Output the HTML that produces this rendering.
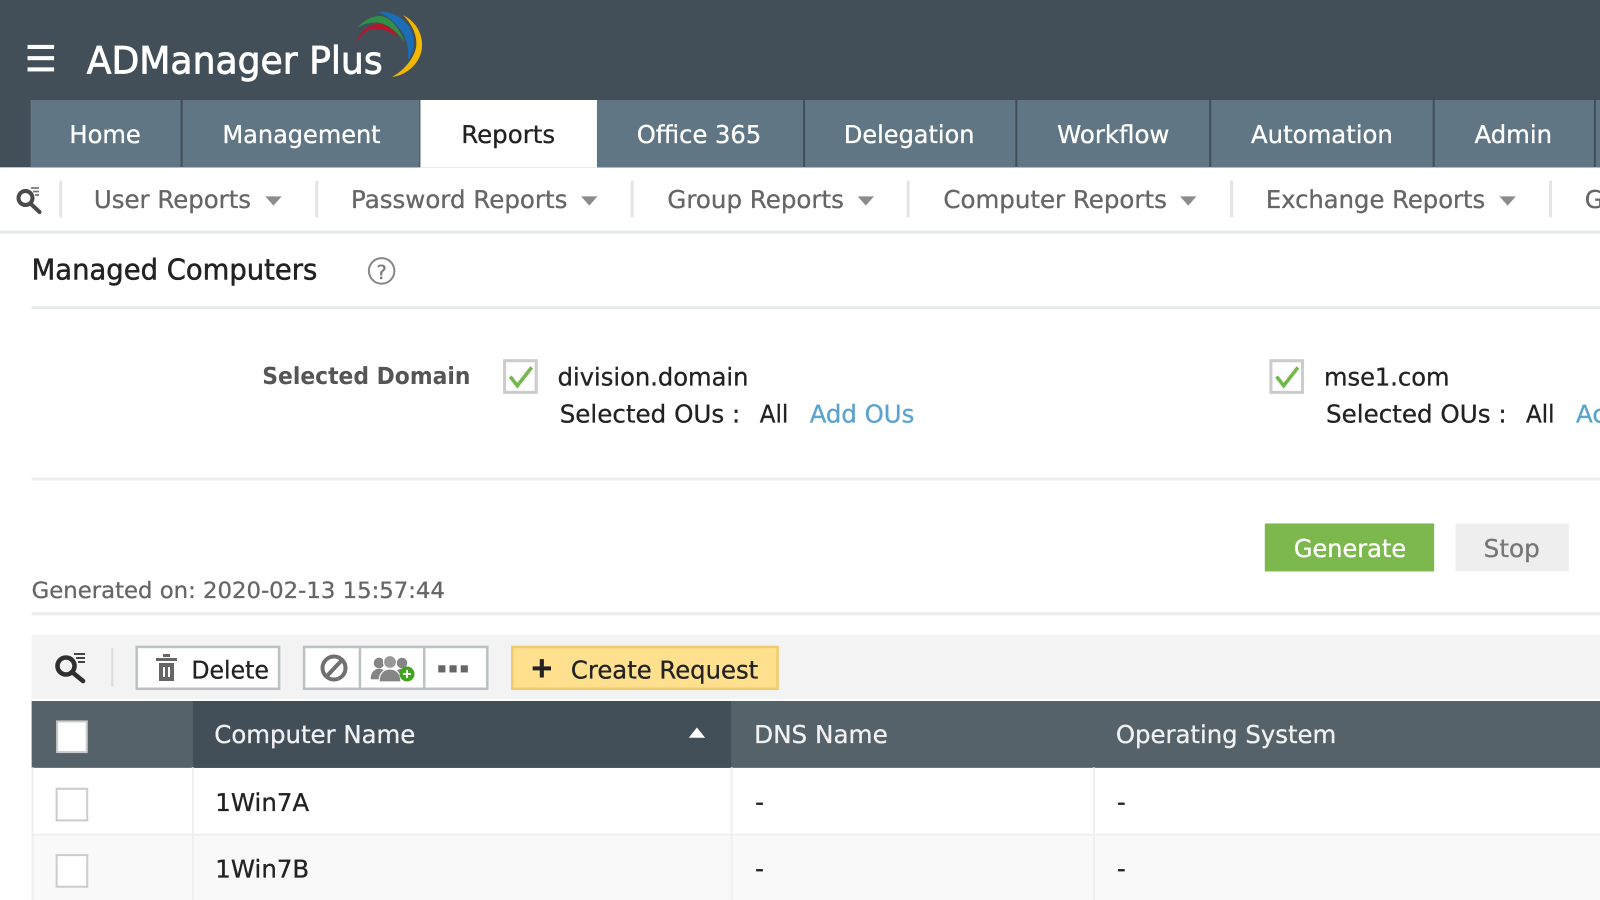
<!DOCTYPE html>
<html lang="en"><head><meta charset="utf-8"><title>ADManager Plus - Managed Computers</title>
<style>
html,body{margin:0;padding:0;background:#fff;width:1600px;height:900px;overflow:hidden}
svg{display:block;filter:blur(.35px)}
text{font-family:"DejaVu Sans","Liberation Sans",sans-serif;font-size:24px;stroke-width:.3px}
.t{fill:#fff;stroke:#fff}
.s{fill:#666;stroke:#666}
.k{fill:#222;stroke:#222}
.h{fill:#f1f1f1;stroke:#f1f1f1}
.b{fill:#5aa3cf;stroke:#5aa3cf}
.g{fill:#777;stroke:#777}
.ln{fill:#e6e9e9}
.cb{fill:#fff;stroke:#ccc;stroke-width:3}
</style></head><body>
<svg width="1600" height="900" viewBox="0 0 1568 882" xmlns="http://www.w3.org/2000/svg" text-rendering="geometricPrecision">
<rect width="1568" height="882" fill="#fff"/>
<!-- header -->
<rect width="1568" height="164" fill="#434f58"/>
<rect x="27" y="44" width="26" height="4" fill="#fff"/><rect x="27" y="55" width="26" height="4" fill="#fff"/><rect x="27" y="66" width="26" height="4" fill="#fff"/>
<text x="85" y="72" textLength="290" lengthAdjust="spacingAndGlyphs" class="t" style="font-size:37px;stroke-width:.8px">ADManager Plus</text>
<g transform="scale(.98)">
<path d="M354 46C359 33 367 25 377 24C386 23 394 30 399 38C391 32 382 28 373 29C365 30 359 37 354 46Z" fill="#b5162d"/>
<path d="M357 28C364 20 372 16 380 16C391 17 400 29 405 43C398 32 388 24 378 22.500C370 22 363 24 357 28Z" fill="#2f9145"/>
<path d="M378 12C391 10 405 18 411 30C416 42 414 52 408 60C409 50 407 42 404 35C398 25 389 16 378 12Z" fill="#1b6db5"/>
<path d="M403 15C415 21 423 33 422 47C421 62 408 75 392 77C403 71 413 60 416 48C418 36 412 24 403 15Z" fill="#f3b700"/>
</g>
<!-- tabs -->
<g fill="#617684">
<rect x="30" y="98" width="147" height="66"/>
<rect x="179" y="98" width="232" height="66"/>
<rect x="585" y="98" width="202" height="66"/>
<rect x="789" y="98" width="206" height="66"/>
<rect x="997" y="98" width="188" height="66"/>
<rect x="1187" y="98" width="217" height="66"/>
<rect x="1406" y="98" width="156" height="66"/>
<rect x="1564" y="98" width="4" height="66"/>
</g>
<rect x="412" y="98" width="173" height="66" fill="#fff"/>
<text x="68" y="140" textLength="70" lengthAdjust="spacingAndGlyphs" class="t">Home</text>
<text x="218" y="140" textLength="155" lengthAdjust="spacingAndGlyphs" class="t">Management</text>
<text x="452" y="140" textLength="92" lengthAdjust="spacingAndGlyphs" class="k">Reports</text>
<text x="624" y="140" textLength="122" lengthAdjust="spacingAndGlyphs" class="t">Office 365</text>
<text x="827" y="140" textLength="128" lengthAdjust="spacingAndGlyphs" class="t">Delegation</text>
<text x="1036" y="140" textLength="110" lengthAdjust="spacingAndGlyphs" class="t">Workflow</text>
<text x="1226" y="140" textLength="139" lengthAdjust="spacingAndGlyphs" class="t">Automation</text>
<text x="1445" y="140" textLength="76" lengthAdjust="spacingAndGlyphs" class="t">Admin</text>
<!-- subnav -->
<g transform="scale(.98)" fill="none" stroke="#4a4a4a">
<circle cx="25.500" cy="198" r="7" stroke-width="4"/><path d="M31 204l8.500 8" stroke-width="4" stroke-linecap="round"/>
<path d="M31 188h8M33 191.500h6M35 195h4" stroke-width="1.800" stroke="#777"/>
</g>
<g fill="#e4e6e6">
<rect x="58" y="177" width="3" height="36"/><rect x="309" y="177" width="3" height="36"/><rect x="618" y="177" width="3" height="36"/><rect x="888.500" y="177" width="3" height="36"/><rect x="1205.500" y="177" width="3" height="36"/><rect x="1518" y="177" width="3" height="36"/>
</g>
<text x="92" y="204" textLength="154" lengthAdjust="spacingAndGlyphs" class="s">User Reports</text>
<text x="344" y="204" textLength="212" lengthAdjust="spacingAndGlyphs" class="s">Password Reports</text>
<text x="654" y="204" textLength="173" lengthAdjust="spacingAndGlyphs" class="s">Group Reports</text>
<text x="924.500" y="204" textLength="219" lengthAdjust="spacingAndGlyphs" class="s">Computer Reports</text>
<text x="1240.500" y="204" textLength="215" lengthAdjust="spacingAndGlyphs" class="s">Exchange Reports</text>
<text x="1553" y="204" class="s">G</text>
<g fill="#8c8c8c">
<path d="M260 192.500h16l-8 9z"/><path d="M569.500 192.500h16l-8 9z"/><path d="M840.500 192.500h16l-8 9z"/><path d="M1156.500 192.500h16l-8 9z"/><path d="M1469.500 192.500h16l-8 9z"/>
</g>
<rect y="226" width="1568" height="3" class="ln"/>
<!-- title -->
<text x="31" y="274" textLength="280" lengthAdjust="spacingAndGlyphs" class="k" style="font-size:28px;stroke-width:.5px">Managed Computers</text>
<circle cx="374" cy="265.500" r="12.500" fill="none" stroke="#888" stroke-width="2"/>
<text x="374" y="273.500" text-anchor="middle" class="g" style="font-size:19px">?</text>
<rect x="31" y="300" width="1537" height="3" class="ln"/>
<!-- domain -->
<text x="257" y="376.500" textLength="204" lengthAdjust="spacingAndGlyphs" fill="#555" style="font-size:23px;font-weight:bold">Selected Domain</text>
<rect x="494.500" y="353.500" width="31" height="31" class="cb"/>
<path d="M500 369l7 9 14-18" fill="none" stroke="#72b84a" stroke-width="3.500"/>
<text x="546.500" y="378" textLength="187" lengthAdjust="spacingAndGlyphs" class="k">division.domain</text>
<text x="548.500" y="414" textLength="177" lengthAdjust="spacingAndGlyphs" class="k">Selected OUs :</text>
<text x="744.500" y="414" textLength="28" lengthAdjust="spacingAndGlyphs" class="k">All</text>
<text x="793.500" y="414" textLength="102.500" lengthAdjust="spacingAndGlyphs" class="b">Add OUs</text>
<rect x="1245.500" y="353.500" width="31" height="31" class="cb"/>
<path d="M1251 369l7 9 14-18" fill="none" stroke="#72b84a" stroke-width="3.500"/>
<text x="1297.500" y="378" textLength="123" lengthAdjust="spacingAndGlyphs" class="k">mse1.com</text>
<text x="1299.500" y="414" textLength="177" lengthAdjust="spacingAndGlyphs" class="k">Selected OUs :</text>
<text x="1495.500" y="414" textLength="28" lengthAdjust="spacingAndGlyphs" class="k">All</text>
<text x="1544.500" y="414" class="b">Ac</text>
<rect x="31" y="468" width="1537" height="3" fill="#eceeee"/>
<!-- buttons -->
<rect x="1239.500" y="513" width="166" height="47" fill="#7db84f"/>
<text x="1268" y="546" textLength="110" lengthAdjust="spacingAndGlyphs" class="t">Generate</text>
<rect x="1426.500" y="513" width="111" height="47" fill="#eee"/>
<text x="1454" y="546" textLength="55" lengthAdjust="spacingAndGlyphs" class="g">Stop</text>
<text x="31" y="586" textLength="405" lengthAdjust="spacingAndGlyphs" class="s" style="font-size:22px">Generated on: 2020-02-13 15:57:44</text>
<rect x="31" y="600" width="1537" height="3" fill="#eceeee"/>
<!-- toolbar -->
<rect x="31" y="622" width="1537" height="63" fill="#f3f3f3"/>
<g transform="scale(.98)" fill="none" stroke="#2f2f2f">
<circle cx="66" cy="666" r="8.500" stroke-width="4.600"/><path d="M72 672l11 9" stroke-width="4.600" stroke-linecap="round"/>
<path d="M74 654h11M76 658h9M78 662h7" stroke-width="2" stroke="#444"/>
</g>
<rect x="109" y="635" width="2" height="38" fill="#dcdcdc"/>
<rect x="134" y="634" width="139.500" height="41" fill="#fff" stroke="#bcc1c4" stroke-width="2.500"/>
<g transform="scale(.98)" fill="#666">
<path d="M156 658h21v3h-21zM163 654h7v3h-7z"/>
<path d="M159 663h15v18h-15zM163 667v10h2v-10zM168 667v10h2v-10z" fill-rule="evenodd"/>
</g>
<text x="187.500" y="665" textLength="76" lengthAdjust="spacingAndGlyphs" class="k">Delete</text>
<rect x="298" y="634" width="179.500" height="41" fill="#fff" stroke="#bcc1c4" stroke-width="2.500"/>
<rect x="351.500" y="634" width="2.500" height="41" fill="#bcc1c4"/><rect x="414.500" y="634" width="2.500" height="41" fill="#bcc1c4"/>
<g transform="scale(.98)">
<circle cx="334" cy="668" r="11.500" fill="none" stroke="#707070" stroke-width="4"/><path d="M327 676l15-16" stroke="#707070" stroke-width="4"/>
<g fill="#858585" stroke="#777" stroke-width=".5">
<circle cx="379" cy="663" r="5"/><circle cx="402" cy="663" r="5"/><path d="M371 679c0-7 4-10 8-10s8 3 8 10z"/><path d="M394 679c0-7 4-10 8-10s8 3 8 10z"/>
<circle cx="390" cy="662" r="6.500" fill="#999" stroke="#fff" stroke-width="1.200"/><path d="M379 682c0-9 5-13 11-13s11 4 11 13z" stroke="#fff" stroke-width="1.200"/>
</g>
<circle cx="407" cy="674" r="7.500" fill="#3fa51d"/><path d="M407 670v8M403 674h8" stroke="#fff" stroke-width="2"/>
</g>
<g fill="#666"><rect x="429.500" y="652" width="7" height="7"/><rect x="440.500" y="652" width="7" height="7"/><rect x="451.500" y="652" width="7" height="7"/></g>
<rect x="502" y="634" width="260" height="41" fill="#ffe08f" stroke="#f0cb6e" stroke-width="2.500"/>
<path d="M531 646v18M522 655h18" stroke="#222" stroke-width="4"/>
<text x="559.500" y="665" textLength="183.500" lengthAdjust="spacingAndGlyphs" class="k">Create Request</text>
<!-- table -->
<rect x="31" y="687" width="1537" height="65.500" fill="#56626a"/>
<rect x="189" y="687" width="527.500" height="65.500" fill="#434f58"/>
<rect x="56" y="707" width="29" height="30" fill="#fff" stroke="#ccc" stroke-width="2"/>
<text x="210" y="728" textLength="197" lengthAdjust="spacingAndGlyphs" class="h">Computer Name</text>
<path d="M675 723l8-10 8 10z" fill="#fff"/>
<text x="739" y="728" textLength="131" lengthAdjust="spacingAndGlyphs" class="h">DNS Name</text>
<text x="1093.500" y="728" textLength="216" lengthAdjust="spacingAndGlyphs" class="h">Operating System</text>
<rect x="31" y="818" width="1537" height="64" fill="#f9f9f9"/>
<rect x="31" y="817" width="1537" height="2" fill="#f0f0f0"/>
<g fill="#efefef"><rect x="31" y="752" width="2" height="130"/><rect x="188" y="752" width="2" height="130"/><rect x="716" y="752" width="2" height="130"/><rect x="1071" y="752" width="2" height="130"/></g>
<rect x="55.500" y="773" width="30" height="31" fill="#fff" stroke="#ccc" stroke-width="2"/>
<rect x="55.500" y="838" width="30" height="31" fill="#fff" stroke="#ccc" stroke-width="2"/>
<text x="211" y="795" textLength="92" lengthAdjust="spacingAndGlyphs" class="k">1Win7A</text>
<text x="740" y="794.500" class="k">-</text><text x="1094.500" y="794.500" class="k">-</text>
<text x="211" y="860" textLength="92" lengthAdjust="spacingAndGlyphs" class="k">1Win7B</text>
<text x="740" y="859.500" class="k">-</text><text x="1094.500" y="859.500" class="k">-</text>
</svg>
</body></html>
